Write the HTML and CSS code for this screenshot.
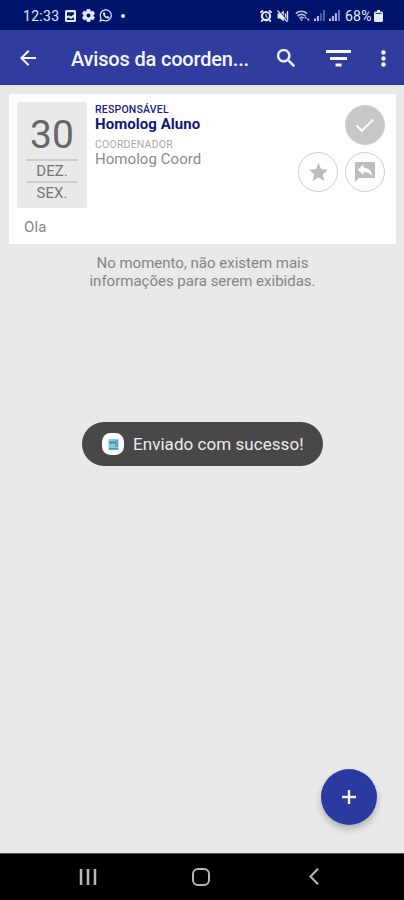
FILE: index.html
```html
<!DOCTYPE html>
<html lang="pt-BR">
<head>
    <meta charset="UTF-8">
    <meta name="viewport" content="width=device-width, initial-scale=1.0">
    <title>Avisos da coordenação</title>
    <link rel="stylesheet" href="styles.css">
</head>
<body>

<!-- Barra de status -->
<div class="status-bar">
    <span class="status-text clock">12:33</span>
    <svg class="icon-picture" width="11" height="12" viewBox="0 0 11 12">
        <path fill-rule="evenodd" d="M1.500 0h8A1.500 1.500 0 0 1 11 1.500v9A1.500 1.500 0 0 1 9.500 12h-8A1.500 1.500 0 0 1 0 10.500v-9A1.500 1.500 0 0 1 1.500 0zM2 2.200v4l2-1 2 1.300 3-2.300v-2zM2 8.500v1.500h7V7.200L6 9 3.800 7.600z"/>
    </svg>
    <svg class="icon-gear" width="13" height="13" viewBox="2 2 20 20">
        <path stroke="currentColor" d="M19.140 12.940c.04-.3.06-.61.06-.94s-.02-.64-.07-.94l2.030-1.580a.49.49 0 0 0 .12-.61l-1.920-3.320a.488.488 0 0 0-.59-.22l-2.390.96c-.5-.38-1.030-.7-1.620-.94l-.36-2.540a.484.484 0 0 0-.48-.41h-3.840c-.24 0-.43.17-.47.41l-.36 2.540c-.59.24-1.130.57-1.620.94l-2.390-.96c-.22-.08-.47 0-.59.22L2.740 8.870c-.12.21-.08.47.12.61l2.030 1.580c-.05.3-.09.63-.09.94s.02.64.07.94l-2.030 1.580a.49.49 0 0 0-.12.61l1.920 3.320c.12.22.37.29.59.22l2.390-.96c.5.38 1.030.7 1.620.94l.36 2.540c.05.24.24.41.48.41h3.840c.24 0 .44-.17.47-.41l.36-2.540c.59-.24 1.130-.56 1.620-.94l2.390.96c.22.08.47 0 .59-.22l1.920-3.320c.12-.22.07-.47-.12-.61zM12 15.600a3.600 3.600 0 1 1 0-7.200 3.600 3.600 0 0 1 0 7.200z"/>
    </svg>
    <svg class="icon-whats" width="14" height="13" viewBox="0 0 14 13">
        <path d="M1.200 12l.8-3A5.500 5.500 0 1 1 4.300 11.200z" fill="none" stroke="currentColor" stroke-width="1.200"/>
        <path d="M4.500 3.500l1-.3.9 1.800-.6.8c.4.900 1.100 1.500 2 1.900l.8-.7 1.700.9c0 1-.8 1.600-1.600 1.600C6.400 9.300 4.100 7 4 4.800c0-.5.1-.9.5-1.300z"/>
    </svg>
    <span class="status-dot"></span>
    <div class="status-right">
        <svg width="12" height="12" viewBox="0 0 12 12">
            <path d="M.3 2.600L3 .4M11.700 2.600L9 .4M2.500 10l-1.200 1.700M9.500 10l1.200 1.700" stroke="currentColor" stroke-width="1.800"/>
            <path fill-rule="evenodd" d="M6 .9a5.200 5.200 0 1 1 0 10.400A5.200 5.200 0 0 1 6 .9zm0 2.200a3 3 0 1 0 0 6 3 3 0 0 0 0-6z"/>
            <path d="M6 4v2.500l1.700.8" fill="none" stroke="currentColor"/>
        </svg>
        <svg class="icon-mute" width="12" height="12" viewBox="0 0 12 12">
            <path d="M.5 3.500H3L6.800.5v11L3 8.500H.5z"/>
            <path d="M8.500 3.500v5M10.500 1v10" fill="none" stroke="currentColor" stroke-width="1.400"/>
            <path d="M1.500 0l9.500 11.500" stroke="#00146c" stroke-width="1.100"/>
            <path d="M.5.500l10 11.500" stroke="currentColor" stroke-width="1.200"/>
        </svg>
        <svg class="icon-wifi" width="15" height="12" viewBox="0 0 15 12">
            <path d="M.8 3.700c3.400-3 7.900-3 11.300 0M2.600 6c2.400-2 5.400-2 7.700 0M4.400 8.100c1.400-1 2.800-1 4.100 0" fill="none" stroke="currentColor" stroke-width="1.700"/>
            <path d="M5 9.300h3l-1.500 2zM9.200 8.500l1.500-2.200 1.500 2.200zM11.800 8.700h3l-1.500 2.500z"/>
        </svg>
        <svg class="icon-signal" width="11" height="11" viewBox="0 0 11 11">
            <path d="M0 8.500h2V11H0zM2.900 6h2v5h-2z"/>
            <path opacity=".45" d="M5.900 3.300h2V11h-2zM9 0h2v11H9z"/>
        </svg>
        <svg class="icon-signal" width="11" height="11" viewBox="0 0 11 11">
            <path d="M0 8.500h2V11H0zM2.900 6h2v5h-2zM5.900 3.300h2V11h-2z"/>
            <path opacity=".6" d="M9 0h2v11H9z"/>
        </svg>
        <span class="status-text">68%</span>
        <svg class="icon-battery" width="9" height="12" viewBox="0 0 9 12">
            <path d="M3 0h3v1.500h1.500A1.500 1.500 0 0 1 9 3v7.500A1.500 1.500 0 0 1 7.500 12h-6A1.500 1.500 0 0 1 0 10.500V3a1.500 1.500 0 0 1 1.500-1.500H3z"/>
            <path d="M1.500 3.400h6" stroke="#00146c" stroke-width=".9"/>
        </svg>
    </div>
</div>

<!-- Barra do aplicativo -->
<header class="app-bar">
    <svg class="icon-back" width="16" height="16" viewBox="4 4 16 16">
        <path d="M20 11H7.830l5.590-5.590L12 4l-8 8 8 8 1.410-1.410L7.830 13H20v-2z"/>
    </svg>
    <h1 class="app-title">Avisos da coorden...</h1>
    <svg class="icon-search" width="18" height="18" viewBox="3 3 17.500 17.500">
        <path stroke="currentColor" stroke-width=".4" d="M15.500 14h-.79l-.28-.27A6.471 6.471 0 0 0 16 9.500 6.500 6.500 0 1 0 9.500 16c1.610 0 3.090-.59 4.230-1.570l.27.28v.79l5 4.990L20.490 19l-4.990-5zm-6 0C7.010 14 5 11.990 5 9.500S7.010 5 9.500 5 14 7.010 14 9.500 11.990 14 9.500 14z"/>
    </svg>
    <svg class="icon-filter" width="25" height="17" viewBox="0 0 25 17">
        <path d="M0 0h25v3H0zM4 7h17v3H4zM9.500 13.500h6v3h-6z"/>
    </svg>
    <svg class="icon-more" width="5" height="17" viewBox="0 0 5 17">
        <circle cx="2.500" cy="2.500" r="2.200"/>
        <circle cx="2.500" cy="8.500" r="2.200"/>
        <circle cx="2.500" cy="14.500" r="2.200"/>
    </svg>
</header>

<!-- Lista de avisos -->
<main class="content">
    <article class="card">
        <div class="card-top">
            <div class="date">
                <span class="date-day">30</span>
                <span class="date-label">DEZ.</span>
                <span class="date-label">SEX.</span>
            </div>
            <div class="people">
                <span class="role role-main">RESPONSÁVEL</span>
                <span class="name name-main">Homolog Aluno</span>
                <span class="role">COORDENADOR</span>
                <span class="name">Homolog Coord</span>
            </div>
            <div class="actions">
                <div class="action action-done">
                    <svg width="20" height="15" viewBox="0 0 20 15">
                        <path d="M1.500 7.500l5.300 5.300L18.300 1.500" fill="none" stroke="#fff" stroke-width="2.100"/>
                    </svg>
                </div>
                <div class="action">
                    <svg width="19" height="18" viewBox="2 2 20 19">
                        <path d="M12 17.270L18.180 21l-1.640-7.030L22 9.240l-7.190-.61L12 2 9.190 8.630 2 9.240l5.460 4.730L5.820 21z"/>
                    </svg>
                </div>
                <div class="action">
                    <svg width="20" height="20" viewBox="0 0 20 20">
                        <path fill-rule="evenodd" d="M1 0h18a1 1 0 0 1 1 1v14a1 1 0 0 1-1 1H4l-4 4V1a1 1 0 0 1 1-1zM8.500 2.500L2.500 7.800 8.500 13v-3c4 0 6.700 1.200 9 4.300-.5-4.800-3.900-8.300-9-8.800z"/>
                    </svg>
                </div>
            </div>
        </div>
        <p class="card-text">Ola</p>
    </article>
    <p class="empty">No momento, não existem mais<br>informações para serem exibidas.</p>
</main>

<!-- Mensagem de envio -->
<div class="toast">
    <svg width="22" height="22" viewBox="0 0 22 22">
        <rect width="22" height="22" rx="8.500" fill="#fff"/>
        <rect x="6.500" y="6" width="10" height="11" fill="#8ccbe6"/>
        <path d="M7 8h6v3H7z" fill="#4b9cc9"/>
        <path d="M13 7h3v7h-3z" fill="#5ba7cc"/>
        <path d="M8 12h4v2H8z" fill="#a9bd8f"/>
        <path d="M7 15h9v1.500H7z" fill="#4595bd"/>
    </svg>
    <span class="toast-text">Enviado com sucesso!</span>
</div>

<!-- Botão flutuante -->
<div class="fab">
    <svg width="14" height="14" viewBox="0 0 14 14">
        <path d="M5.800 0h2.400v5.800H14v2.400H8.200V14H5.800V8.200H0V5.800h5.800z"/>
    </svg>
</div>

<!-- Navegação do sistema -->
<nav class="nav-bar">
    <svg width="18" height="18" viewBox="0 0 18 18">
        <path d="M2 1v16M9 1v16M16 1v16" stroke="currentColor" stroke-width="2.500"/>
    </svg>
    <svg class="icon-home" width="18" height="18" viewBox="0 0 18 18">
        <rect x="1" y="1" width="16" height="16" rx="5" fill="none" stroke="currentColor" stroke-width="2"/>
    </svg>
    <svg width="10" height="17" viewBox="0 0 10 17">
        <path d="M9 .8L1.500 8.500 9 16.200" fill="none" stroke="currentColor" stroke-width="2"/>
    </svg>
</nav>

</body>
</html>
```
FILE: styles.css
```css
/* Estilos gerais */
* {
    box-sizing: border-box;
}
body {
    margin: 0;
    height: 900px;
    display: flex;
    flex-direction: column;
    overflow: hidden;
    background: #e9e9e9;
    font-family: Roboto, "Liberation Sans", sans-serif;
    color: #777;
}
svg {
    display: block;
    flex: none;
    fill: currentColor;
}

/* Barra de status */
.status-bar {
    height: 30px;
    flex: none;
    display: flex;
    align-items: center;
    padding: 1px 21px 0 23px;
    background: #00146c;
    color: #e6e9f8;
}
.status-text {
    font-size: 14px;
    line-height: 16px;
}
.clock {
    width: 37px;
    letter-spacing: 0.3px;
}
.icon-picture {
    margin-left: 5px;
}
.icon-gear {
    margin-left: 6px;
}
.icon-whats {
    margin-left: 4px;
}
.status-dot {
    width: 4px;
    height: 4px;
    margin-left: 8px;
    border-radius: 50%;
    background: currentColor;
}
.status-right {
    display: flex;
    align-items: center;
    margin-left: auto;
}
.icon-mute {
    margin-left: 5px;
}
.icon-wifi {
    margin-left: 6px;
    opacity: 0.8;
}
.icon-signal {
    margin-left: 4px;
    opacity: 0.8;
}
.status-right .status-text {
    width: 28px;
    margin-left: 5px;
    letter-spacing: 0.2px;
}
.icon-battery {
    margin-left: 1px;
}

/* Barra do aplicativo */
.app-bar {
    height: 55px;
    flex: none;
    display: flex;
    align-items: center;
    padding: 2px 18px 0 20px;
    background: #303d9f;
    border-bottom: 1px solid #26358f;
    color: #f5f6ff;
}
.app-title {
    width: 178px;
    margin: 2px 0 0 35px;
    font-size: 20px;
    font-weight: 500;
    line-height: 24px;
    letter-spacing: -0.18px;
    white-space: nowrap;
}
.icon-search {
    margin-left: 28px;
}
.icon-filter {
    margin-left: 31px;
}
.icon-more {
    margin-left: auto;
}

/* Cartão do aviso */
.content {
    flex: 1;
    padding: 9px 8px 0 9px;
}
.card {
    height: 150px;
    padding: 8px 11px 0 8px;
    background: #fff;
}
.card-top {
    display: flex;
    height: 106px;
}
.date {
    width: 70px;
    display: flex;
    flex-direction: column;
    align-items: center;
    padding-top: 9px;
    border-radius: 2px;
    background: #e9e9e9;
}
.date-day {
    height: 48px;
    font-size: 39px;
    line-height: 49px;
    color: #666;
}
.date-label {
    width: 52px;
    height: 22px;
    border-top: 2px solid #ccc;
    font-size: 15px;
    line-height: 21px;
    text-align: center;
}
.people {
    display: flex;
    flex-direction: column;
    padding-left: 8px;
}
.role {
    margin-top: 5px;
    font-size: 10.5px;
    line-height: 15px;
    height: 14px;
    letter-spacing: 0.2px;
    color: #aaa;
}
.role-main {
    margin-top: 0;
    font-weight: 500;
    color: #16237f;
}
.name {
    font-size: 15px;
    line-height: 16px;
    letter-spacing: 0.05px;
    color: #8c8c8c;
}
.name-main {
    font-weight: 700;
    color: #10177d;
}

/* Ações do aviso */
.actions {
    width: 88px;
    display: flex;
    flex-wrap: wrap;
    justify-content: flex-end;
    align-content: flex-start;
    gap: 7px;
    margin-left: auto;
    padding-top: 3px;
}
.action {
    width: 40px;
    height: 40px;
    display: flex;
    align-items: center;
    justify-content: center;
    border: 1px solid #cfcfcf;
    border-radius: 50%;
    color: #bdbdbd;
}
.action-done {
    margin-left: 40px;
    background: #c8c8c8;
}
.card-text {
    margin: 9px 0 0 7px;
    font-size: 15px;
    line-height: 20px;
    letter-spacing: 0.2px;
    color: #888;
}
.empty {
    margin: 10px 0 0;
    font-size: 15px;
    line-height: 18px;
    text-align: center;
    color: #858585;
}

/* Mensagem de envio */
.toast {
    position: absolute;
    left: 82px;
    top: 422px;
    width: 241px;
    height: 44px;
    display: flex;
    align-items: center;
    padding-left: 20px;
    border-radius: 22px;
    background: #484848;
}
.toast-text {
    margin-left: 9px;
    font-size: 17px;
    line-height: 22px;
    letter-spacing: 0.05px;
    white-space: nowrap;
    color: #ececec;
}

/* Botão flutuante */
.fab {
    position: absolute;
    left: 321px;
    top: 769px;
    width: 56px;
    height: 56px;
    display: flex;
    align-items: center;
    justify-content: center;
    border-radius: 50%;
    background: #2b3a9f;
    box-shadow: 0 4px 7px rgba(0, 0, 0, 0.25);
    color: #f0f3ff;
}

/* Navegação do sistema */
.nav-bar {
    height: 47px;
    flex: none;
    display: flex;
    align-items: center;
    padding: 0 85px 1px 79px;
    border-top: 1px solid #555;
    background: #000;
    color: #b8b8b8;
}
.icon-home {
    margin: 0 99px 0 95px;
}
```
